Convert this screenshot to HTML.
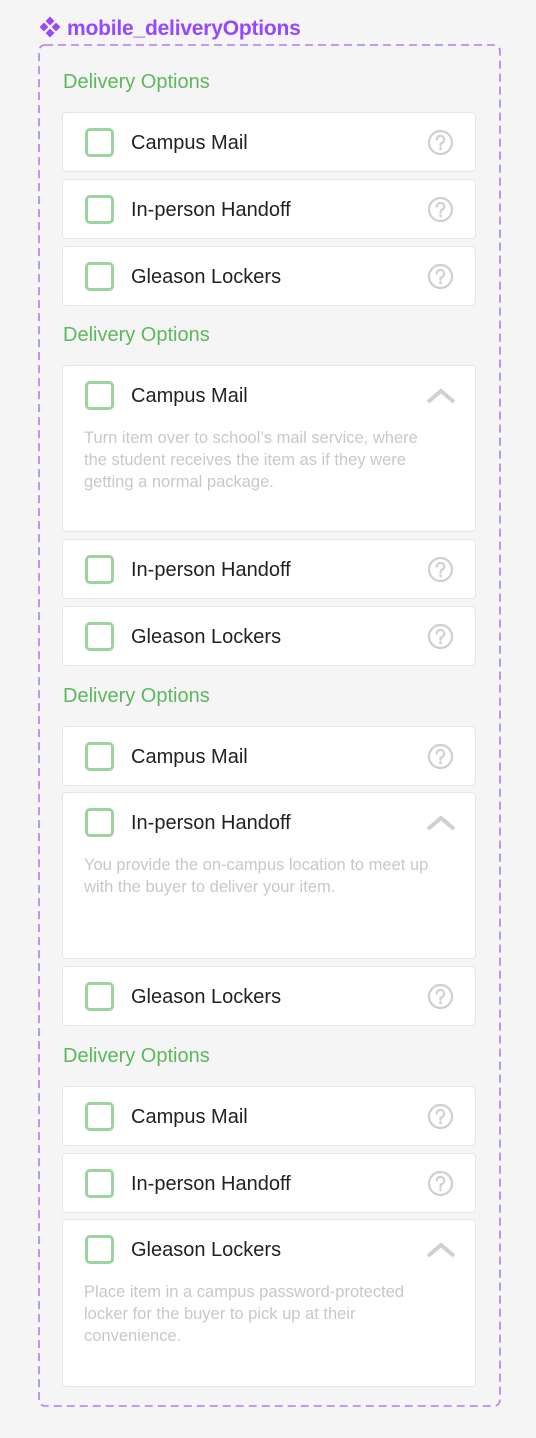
<!DOCTYPE html>
<html><head><meta charset="utf-8"><style>
*{margin:0;padding:0;box-sizing:border-box}
body{width:536px;height:1438px;background:#f5f5f5;font-family:"Liberation Sans",sans-serif;position:relative;overflow:hidden}
.title{position:absolute;left:39px;top:16px;color:#9747ff;font-size:21px;line-height:26px;white-space:nowrap;font-weight:bold;letter-spacing:-0.2px}
.title svg{vertical-align:-3px;margin-right:6px}
.frame{position:absolute;left:38px;top:44px}
.h{position:absolute;left:63px;color:#5cb85c;font-size:20px;line-height:24px}
.card{position:absolute;left:62px;width:414px;height:60px;background:#fff;border:1px solid #e6e6e6;border-radius:4px}
.cb{position:absolute;left:22px;top:15px;width:29px;height:29px;border:3px solid #9ed39f;border-radius:5px}
.lbl{position:absolute;left:68px;top:17px;font-size:20px;line-height:26px;color:#222;white-space:nowrap}
.q{position:absolute;left:364px;top:16px}
.chev{position:absolute;left:362px;top:20px}
.desc{position:absolute;left:21px;top:61px;width:355px;font-size:16.5px;line-height:22px;color:#c8c8c8}
</style></head><body>
<div class="title"><svg width="22" height="22" viewBox="0 0 20 20" fill="#9747ff"><path d="M10 0.5l4 4-4 4-4-4z M4.5 6l4 4-4 4-4-4z M15.5 6l4 4-4 4-4-4z M10 11.5l4 4-4 4-4-4z"/></svg>mobile_deliveryOptions</div>
<svg class="frame" width="463" height="1364"><rect x="1" y="1" width="461" height="1361" rx="6" fill="none" stroke="#b07cf5" stroke-width="1.6" stroke-dasharray="8 5"/></svg>

<div class="h" style="top:70px">Delivery Options</div>
<div class="card" style="top:112px"><div class="cb"></div><div class="lbl">Campus Mail</div><svg class="q" width="27" height="27" viewBox="0 0 27 27"><circle cx="13.5" cy="13.5" r="11.5" fill="none" stroke="#cfcfcf" stroke-width="2.2"/><path d="M9.8 10.5a3.7 3.7 0 1 1 5.2 3.4c-1 .5-1.5 1.2-1.5 2.3v.6" fill="none" stroke="#cfcfcf" stroke-width="2.2" stroke-linecap="round"/><circle cx="13.5" cy="19.8" r="1.4" fill="#cfcfcf"/></svg></div>
<div class="card" style="top:179px"><div class="cb"></div><div class="lbl">In-person Handoff</div><svg class="q" width="27" height="27" viewBox="0 0 27 27"><circle cx="13.5" cy="13.5" r="11.5" fill="none" stroke="#cfcfcf" stroke-width="2.2"/><path d="M9.8 10.5a3.7 3.7 0 1 1 5.2 3.4c-1 .5-1.5 1.2-1.5 2.3v.6" fill="none" stroke="#cfcfcf" stroke-width="2.2" stroke-linecap="round"/><circle cx="13.5" cy="19.8" r="1.4" fill="#cfcfcf"/></svg></div>
<div class="card" style="top:246px"><div class="cb"></div><div class="lbl">Gleason Lockers</div><svg class="q" width="27" height="27" viewBox="0 0 27 27"><circle cx="13.5" cy="13.5" r="11.5" fill="none" stroke="#cfcfcf" stroke-width="2.2"/><path d="M9.8 10.5a3.7 3.7 0 1 1 5.2 3.4c-1 .5-1.5 1.2-1.5 2.3v.6" fill="none" stroke="#cfcfcf" stroke-width="2.2" stroke-linecap="round"/><circle cx="13.5" cy="19.8" r="1.4" fill="#cfcfcf"/></svg></div>

<div class="h" style="top:323px">Delivery Options</div>
<div class="card" style="top:365px;height:167px"><div class="cb"></div><div class="lbl">Campus Mail</div><svg class="chev" width="32" height="20" viewBox="0 0 32 20"><path d="M3 16L16 5l13 11" fill="none" stroke="#d0d0d0" stroke-width="4"/></svg><div class="desc">Turn item over to school’s mail service, where the student receives the item as if they were getting a normal package.</div></div>
<div class="card" style="top:539px"><div class="cb"></div><div class="lbl">In-person Handoff</div><svg class="q" width="27" height="27" viewBox="0 0 27 27"><circle cx="13.5" cy="13.5" r="11.5" fill="none" stroke="#cfcfcf" stroke-width="2.2"/><path d="M9.8 10.5a3.7 3.7 0 1 1 5.2 3.4c-1 .5-1.5 1.2-1.5 2.3v.6" fill="none" stroke="#cfcfcf" stroke-width="2.2" stroke-linecap="round"/><circle cx="13.5" cy="19.8" r="1.4" fill="#cfcfcf"/></svg></div>
<div class="card" style="top:606px"><div class="cb"></div><div class="lbl">Gleason Lockers</div><svg class="q" width="27" height="27" viewBox="0 0 27 27"><circle cx="13.5" cy="13.5" r="11.5" fill="none" stroke="#cfcfcf" stroke-width="2.2"/><path d="M9.8 10.5a3.7 3.7 0 1 1 5.2 3.4c-1 .5-1.5 1.2-1.5 2.3v.6" fill="none" stroke="#cfcfcf" stroke-width="2.2" stroke-linecap="round"/><circle cx="13.5" cy="19.8" r="1.4" fill="#cfcfcf"/></svg></div>

<div class="h" style="top:684px">Delivery Options</div>
<div class="card" style="top:726px"><div class="cb"></div><div class="lbl">Campus Mail</div><svg class="q" width="27" height="27" viewBox="0 0 27 27"><circle cx="13.5" cy="13.5" r="11.5" fill="none" stroke="#cfcfcf" stroke-width="2.2"/><path d="M9.8 10.5a3.7 3.7 0 1 1 5.2 3.4c-1 .5-1.5 1.2-1.5 2.3v.6" fill="none" stroke="#cfcfcf" stroke-width="2.2" stroke-linecap="round"/><circle cx="13.5" cy="19.8" r="1.4" fill="#cfcfcf"/></svg></div>
<div class="card" style="top:792px;height:167px"><div class="cb"></div><div class="lbl">In-person Handoff</div><svg class="chev" width="32" height="20" viewBox="0 0 32 20"><path d="M3 16L16 5l13 11" fill="none" stroke="#d0d0d0" stroke-width="4"/></svg><div class="desc" style="width:350px">You provide the on-campus location to meet up with the buyer to deliver your item.</div></div>
<div class="card" style="top:966px"><div class="cb"></div><div class="lbl">Gleason Lockers</div><svg class="q" width="27" height="27" viewBox="0 0 27 27"><circle cx="13.5" cy="13.5" r="11.5" fill="none" stroke="#cfcfcf" stroke-width="2.2"/><path d="M9.8 10.5a3.7 3.7 0 1 1 5.2 3.4c-1 .5-1.5 1.2-1.5 2.3v.6" fill="none" stroke="#cfcfcf" stroke-width="2.2" stroke-linecap="round"/><circle cx="13.5" cy="19.8" r="1.4" fill="#cfcfcf"/></svg></div>

<div class="h" style="top:1044px">Delivery Options</div>
<div class="card" style="top:1086px"><div class="cb"></div><div class="lbl">Campus Mail</div><svg class="q" width="27" height="27" viewBox="0 0 27 27"><circle cx="13.5" cy="13.5" r="11.5" fill="none" stroke="#cfcfcf" stroke-width="2.2"/><path d="M9.8 10.5a3.7 3.7 0 1 1 5.2 3.4c-1 .5-1.5 1.2-1.5 2.3v.6" fill="none" stroke="#cfcfcf" stroke-width="2.2" stroke-linecap="round"/><circle cx="13.5" cy="19.8" r="1.4" fill="#cfcfcf"/></svg></div>
<div class="card" style="top:1153px"><div class="cb"></div><div class="lbl">In-person Handoff</div><svg class="q" width="27" height="27" viewBox="0 0 27 27"><circle cx="13.5" cy="13.5" r="11.5" fill="none" stroke="#cfcfcf" stroke-width="2.2"/><path d="M9.8 10.5a3.7 3.7 0 1 1 5.2 3.4c-1 .5-1.5 1.2-1.5 2.3v.6" fill="none" stroke="#cfcfcf" stroke-width="2.2" stroke-linecap="round"/><circle cx="13.5" cy="19.8" r="1.4" fill="#cfcfcf"/></svg></div>
<div class="card" style="top:1219px;height:168px"><div class="cb"></div><div class="lbl">Gleason Lockers</div><svg class="chev" width="32" height="20" viewBox="0 0 32 20"><path d="M3 16L16 5l13 11" fill="none" stroke="#d0d0d0" stroke-width="4"/></svg><div class="desc" style="width:345px">Place item in a campus password-protected locker for the buyer to pick up at their convenience.</div></div>
</body></html>
